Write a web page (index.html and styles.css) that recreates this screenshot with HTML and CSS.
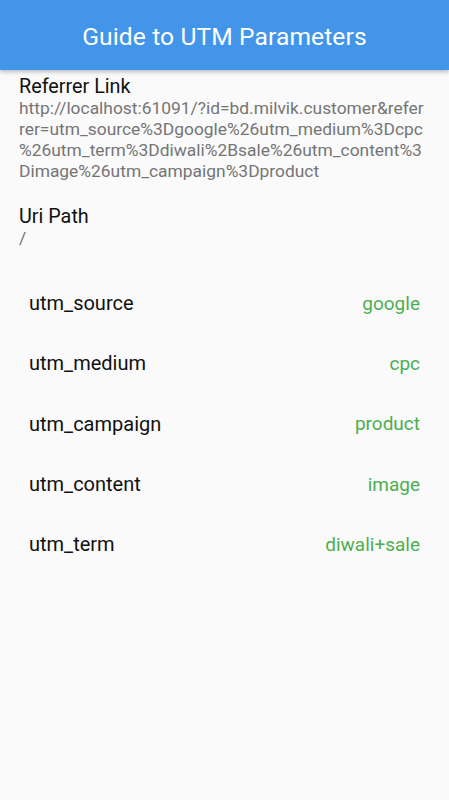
FILE: index.html
```html
<!DOCTYPE html>
<html lang="en">
<head>
  <meta charset="UTF-8">
  <meta name="viewport" content="width=device-width, initial-scale=1.0">
  <title>Guide to UTM Parameters</title>
  <link rel="stylesheet" href="styles.css">
</head>
<body>
  <header class="app-bar">
    <h1 class="app-title">Guide to UTM Parameters</h1>
  </header>
  <main class="content">
    <section class="info">
      <div class="info-label">Referrer Link</div>
      <div class="info-value">http://localhost:61091/?id=bd.milvik.customer&amp;referrer=utm_source%3Dgoogle%26utm_medium%3Dcpc%26utm_term%3Ddiwali%2Bsale%26utm_content%3Dimage%26utm_campaign%3Dproduct</div>
    </section>
    <section class="info">
      <div class="info-label">Uri Path</div>
      <div class="info-value">/</div>
    </section>
    <ul class="params">
      <li class="param"><span class="param-key">utm_source</span><span class="param-val">google</span></li>
      <li class="param"><span class="param-key">utm_medium</span><span class="param-val">cpc</span></li>
      <li class="param"><span class="param-key">utm_campaign</span><span class="param-val">product</span></li>
      <li class="param"><span class="param-key">utm_content</span><span class="param-val">image</span></li>
      <li class="param"><span class="param-key">utm_term</span><span class="param-val">diwali+sale</span></li>
    </ul>
  </main>
</body>
</html>
```

FILE: styles.css
```css
*{
  margin:0;
  padding:0;
  box-sizing:border-box;
}
body{
  background:#fafafa;
  font-family:Roboto, "Noto Sans", sans-serif;
  color:#212121;
  width:449px;
  height:800px;
  overflow:hidden;
}
.app-bar{
  height:70px;
  padding-top:3px;
  background:#4295e9;
  display:flex;
  align-items:center;
  justify-content:center;
  box-shadow:0 2px 4px rgba(0,0,0,0.25);
}
.app-title{
  color:#fff;
  font-size:24.6px;
  font-weight:400;
  line-height:30px;
  letter-spacing:0.1px;
}
.content{
  padding:6px 19px 0 19px;
}
.info{
  margin-bottom:24px;
}
.info-label{
  font-size:19.8px;
  line-height:22px;
  color:#111;
}
.info-value{
  font-size:17.4px;
  line-height:21px;
  color:#757575;
  padding-right:4px;
  word-break:break-all;
  line-break:anywhere;
}
.params{
  list-style:none;
  margin-top:3px;
  padding:0 10px;
}
.param{
  height:60.3px;
  display:flex;
  align-items:center;
  justify-content:space-between;
}
.param-key{
  font-size:20px;
  color:#111;
}
.param-val{
  font-size:19px;
  color:#4caf50;
}
```
